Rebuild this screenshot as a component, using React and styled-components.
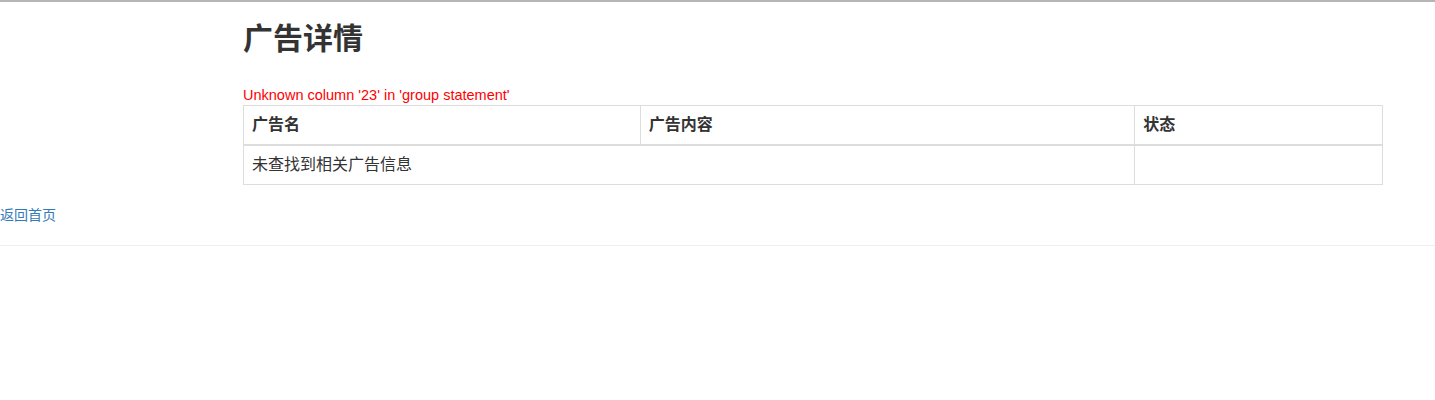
import styled, { createGlobalStyle } from "styled-components";

const GlobalStyle = createGlobalStyle`
    html, body {
        margin: 0;
        padding: 0;
        background: #fff;
    }
    body {
        font-family: "Liberation Sans", "Noto Sans CJK SC", sans-serif;
        font-size: 14px;
        line-height: 1.42857;
        color: #333;
        border-top: 2px solid #b5b5b5;
    }
`

const Container = styled.div`
    width: 1140px;
    margin-left: 243px;
`

const Title = styled.h2`
    font-size: 30px;
    font-weight: 700;
    line-height: 33px;
    margin: 20px 0 10px;
    color: #333;
`

const ErrorMsg = styled.div`
    margin-top: 30px;
    color: #ff0000;
    font-size: 14.5px;
    line-height: 20px;
`

const Table = styled.table`
    width: 100%;
    border-collapse: collapse;
    border-spacing: 0;
    border: 1px solid #ddd;
    margin-bottom: 20px;
    font-size: 16px;

    th, td {
        border: 1px solid #ddd;
        padding: 8px;
        line-height: 22px;
        text-align: left;
        vertical-align: top;
    }

    thead th {
        border-bottom-width: 2px;
        font-weight: 700;
    }
`

const Back = styled.a`
    display: block;
    color: #337ab7;
    text-decoration: none;
    line-height: 20px;
`

const Rule = styled.hr`
    margin: 20px 0;
    border: 0;
    border-top: 1px solid #eee;
`

export default function App() {
    const cols = [
        { name: '广告名', width: 397 },
        { name: '广告内容', width: 495 },
        { name: '状态', width: 248 },
    ];

    return (
        <>
            <GlobalStyle />
            <Container>
                <Title>广告详情</Title>
                <ErrorMsg>Unknown column '23' in 'group statement'</ErrorMsg>
                <Table>
                    <colgroup>
                        {cols.map((c) => (
                            <col key={c.name} style={{ width: c.width }} />
                        ))}
                    </colgroup>
                    <thead>
                        <tr>
                            {cols.map((c) => (
                                <th key={c.name}>{c.name}</th>
                            ))}
                        </tr>
                    </thead>
                    <tbody>
                        <tr>
                            <td colSpan={2}>未查找到相关广告信息</td>
                            <td></td>
                        </tr>
                    </tbody>
                </Table>
            </Container>
            <Back href="#">返回首页</Back>
            <Rule />
        </>
    )
}
